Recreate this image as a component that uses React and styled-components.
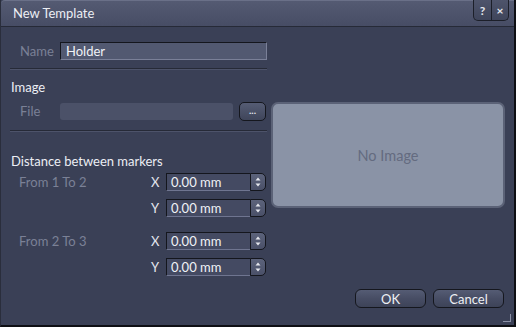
import React from "react";
import styled, { createGlobalStyle } from "styled-components";

const Global = createGlobalStyle`
  html, body { margin: 0; padding: 0; background: #1a1c22; }
  body { font-family: "Lato", "Open Sans", sans-serif; }
  * { box-sizing: border-box; }
`;

const Window = styled.div`
  width: 516px;
  height: 327px;
  display: flex;
  flex-direction: column;
  background: #3a4056;
  border-right: 2px solid #0e0f14;
  border-bottom: 2px solid #0e0f14;
  border-left: 1px solid #2a2e3c;
  position: relative;
  overflow: hidden;
`;

const TitleBar = styled.div`
  height: 27px;
  flex: none;
  display: flex;
  align-items: flex-start;
  justify-content: space-between;
  background: linear-gradient(#545a72, #474d65);
  border-top: 1px solid #6a7088;
  border-bottom: 1px solid #262a37;
  border-top-left-radius: 4px;
  padding-left: 12px;
`;

const Title = styled.div`
  color: #eceef4;
  font-size: 13px;
  line-height: 25px;
`;

const TitleButtons = styled.div`
  display: flex;
  margin-right: 5px;
  margin-top: -1px;
  border: 1px solid #1c1f29;
  border-top: none;
  border-radius: 0 0 5px 5px;
  overflow: hidden;
  background: linear-gradient(#4e546b, #3f455b);
`;

const TitleBtn = styled.div`
  width: 17px;
  height: 20px;
  display: flex;
  align-items: center;
  justify-content: center;
  color: #e6e8ee;
  font-size: 12px;
  font-weight: bold;
  border-left: ${(p) => (p.$first ? "none" : "1px solid #1c1f29")};
`;

const Body = styled.div`
  flex: 1;
  display: flex;
  padding: 15px 0 0 9px;
  position: relative;
`;

const LeftCol = styled.div`
  width: 257px;
  display: flex;
  flex-direction: column;
`;

const RightCol = styled.div`
  flex: 1;
  display: flex;
  flex-direction: column;
  padding: 60px 9px 0 4px;
`;

const Row = styled.div`
  display: flex;
  align-items: center;
  height: 18px;
  margin-top: ${(p) => p.$mt || 0}px;
`;

const Label = styled.div`
  color: #7b8196;
  font-size: 13px;
  width: ${(p) => p.$w || 50}px;
  padding-left: ${(p) => p.$pl || 10}px;
  flex: none;
`;

const TextInput = styled.div`
  flex: 1;
  height: 18px;
  background: #525971;
  border: 1px solid #7a8098;
  border-top-color: #14161d;
  border-left-color: #14161d;
  color: #f0f2f6;
  font-size: 13px;
  line-height: 16px;
  padding-left: 5px;
`;

const FileInput = styled.div`
  width: 173px;
  height: 17px;
  background: #4b5168;
  border-radius: 3px;
`;

const DotsButton = styled.div`
  width: 27px;
  height: 19px;
  margin-left: 6px;
  border: 1px solid #15171e;
  border-radius: 5px;
  background: linear-gradient(#555c74, #3f455a);
  color: #e4e6ee;
  font-size: 10px;
  font-weight: bold;
  display: flex;
  align-items: center;
  justify-content: center;
  line-height: 1;
  padding-bottom: 2px;
`;

const Separator = styled.div`
  height: 2px;
  border-top: 1px solid #262a37;
  border-bottom: 1px solid #4d536a;
  margin: ${(p) => p.$m};
`;

const Heading = styled.div`
  color: #eceef4;
  font-size: 13px;
  line-height: 14px;
  margin: ${(p) => p.$m};
`;

const AxisRow = styled.div`
  display: flex;
  align-items: center;
  height: 18px;
  margin-top: ${(p) => p.$mt || 0}px;
`;

const Axis = styled.div`
  color: #e4e6ee;
  font-size: 13px;
  width: 15px;
  flex: none;
`;

const Spin = styled.div`
  display: flex;
  height: 18px;
  width: 100px;
`;

const SpinField = styled.div`
  flex: 1;
  background: #444a62;
  border: 1px solid #14161d;
  border-right: none;
  border-bottom-color: #6f7590;
  color: #f0f2f6;
  font-size: 13px;
  line-height: 16px;
  padding-left: 4px;
`;

const SpinButtons = styled.div`
  width: 16px;
  background: linear-gradient(#5c637b, #4a5068);
  border: 1px solid #14161d;
  border-radius: 0 5px 5px 0;
  display: flex;
  align-items: center;
  justify-content: center;
`;

const Preview = styled.div`
  height: 106px;
  background: #8a93a6;
  border: 2px solid #5b6277;
  border-radius: 7px;
  display: flex;
  align-items: center;
  justify-content: center;
  color: #646b80;
  font-size: 14.5px;
`;

const Footer = styled.div`
  position: absolute;
  right: 10px;
  bottom: 17px;
  display: flex;
  gap: 7px;
`;

const Button = styled.div`
  width: 71px;
  height: 19px;
  border: 1px solid #15171e;
  border-radius: 6px;
  background: linear-gradient(#555c74 0%, #474d64 50%, #3d4358 100%);
  color: #eef0f4;
  font-size: 13px;
  display: flex;
  align-items: center;
  justify-content: center;
`;

const Grip = styled.div`
  position: absolute;
  right: 3px;
  bottom: 3px;
  width: 8px;
  height: 8px;
  border-right: 1px solid #8a90a6;
  border-bottom: 1px solid #8a90a6;
`;

const SpinArrows = () => (
  <svg width="6" height="10" viewBox="0 0 6 10">
    <path d="M3 0.5 L5.5 3.5 L0.5 3.5 Z" fill="#e6e8ee" />
    <path d="M3 9.5 L5.5 6.5 L0.5 6.5 Z" fill="#e6e8ee" />
  </svg>
);

const SpinBox = ({ value }) => (
  <Spin>
    <SpinField>{value}</SpinField>
    <SpinButtons>
      <SpinArrows />
    </SpinButtons>
  </Spin>
);

const MarkerGroup = ({ title, mt }) => (
  <>
    <AxisRow $mt={mt}>
      <Label $w={141} $pl={9}>{title}</Label>
      <Axis>X</Axis>
      <SpinBox value="0.00 mm" />
    </AxisRow>
    <AxisRow $mt={8}>
      <Label $w={141} $pl={9} />
      <Axis>Y</Axis>
      <SpinBox value="0.00 mm" />
    </AxisRow>
  </>
);

export default function App() {
  return (
    <>
      <Global />
      <Window>
        <TitleBar>
          <Title>New Template</Title>
          <TitleButtons>
            <TitleBtn $first>?</TitleBtn>
            <TitleBtn>×</TitleBtn>
          </TitleButtons>
        </TitleBar>
        <Body>
          <LeftCol>
            <Row>
              <Label>Name</Label>
              <TextInput>Holder</TextInput>
            </Row>
            <Separator $m="8px 0 0 0" />
            <Heading $m="10px 0 0 1px">Image</Heading>
            <Row $mt={8}>
              <Label>File</Label>
              <FileInput />
              <DotsButton>...</DotsButton>
            </Row>
            <Separator $m="10px 0 0 0" />
            <Heading $m="22px 0 0 1px">Distance between markers</Heading>
            <MarkerGroup title="From 1 To 2" mt={5} />
            <MarkerGroup title="From 2 To 3" mt={15} />
          </LeftCol>
          <RightCol>
            <Preview>No Image</Preview>
          </RightCol>
          <Footer>
            <Button>OK</Button>
            <Button>Cancel</Button>
          </Footer>
        </Body>
        <Grip />
      </Window>
    </>
  );
}
